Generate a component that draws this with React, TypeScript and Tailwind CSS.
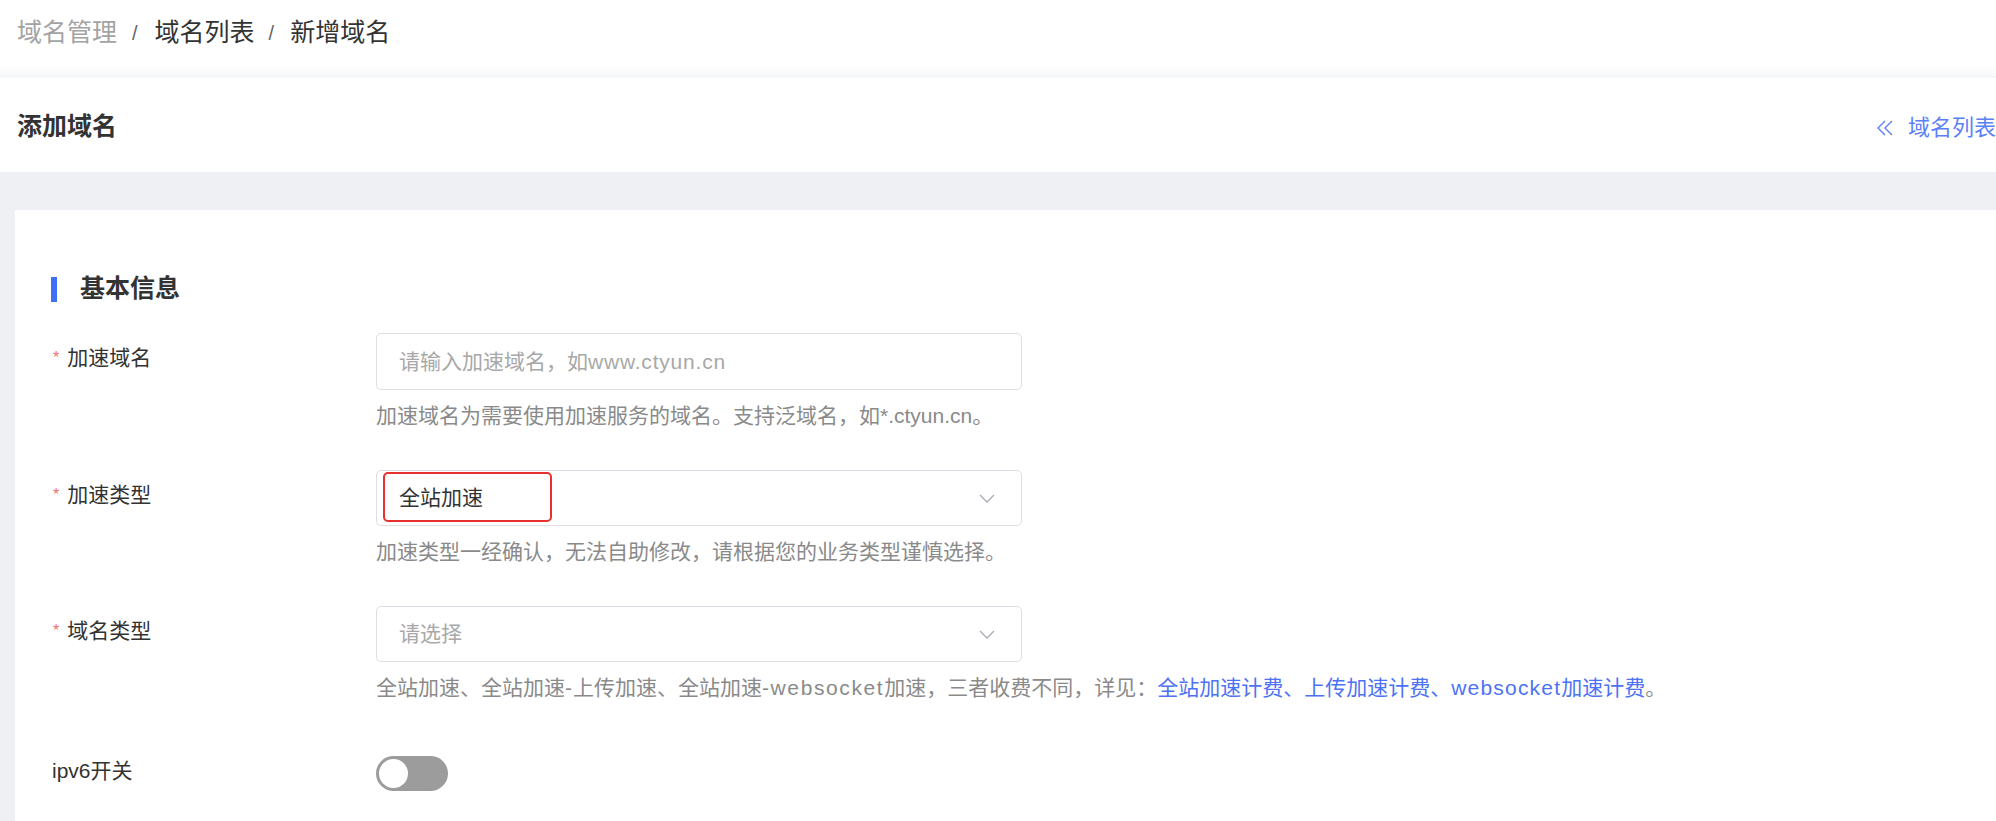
import React, { useState } from 'react';

const font = "font-['Liberation_Sans','Noto_Sans_CJK_SC',sans-serif]";

const Chevron = () => (
  <svg width="18" height="18" viewBox="0 0 18 18" fill="none">
    <path d="M2 6l7 7 7-7" stroke="#a8abb2" strokeWidth="1.3" />
  </svg>
);

const DoubleLeft = () => (
  <svg width="18" height="16" viewBox="0 0 18 16" fill="none">
    <path d="M9 1L2 8l7 7M16 1L9 8l7 7" stroke="#5b7ff8" strokeWidth="1.4" />
  </svg>
);

interface ItemProps {
  label: string;
  required?: boolean;
  children: React.ReactNode;
  help?: React.ReactNode;
}

const FormItem: React.FC<ItemProps> = ({ label, required, children, help }) => (
  <div className="flex mb-[39px]">
    <div className="w-[324px] shrink-0 pt-[10px] text-[21px] leading-[30px] text-[#333]">
      {required && <span className="text-[#f56c6c] text-[16px] ml-[1px] mr-[8px] align-top">*</span>}
      {label}
    </div>
    <div className="w-[646px]">
      {children}
      {help && <div className="mt-[11px] text-[21px] leading-[30px] text-[#8a8a8a] whitespace-nowrap">{help}</div>}
    </div>
  </div>
);

const App: React.FC = () => {
  const [ipv6, setIpv6] = useState(false);

  return (
    <div className={`${font} w-[1996px] h-[821px] overflow-hidden bg-[#eef0f4]`}>
      {/* breadcrumb */}
      <div className="h-[66px] bg-white flex items-center pl-[17px] text-[25px] text-[#333]">
        <span className="text-[#a3a3a3]">域名管理</span>
        <span className="ml-[15px] mr-[17px] text-[#666] text-[20px]">/</span>
        <span>域名列表</span>
        <span className="ml-[14px] mr-[16px] text-[#666] text-[20px]">/</span>
        <span>新增域名</span>
      </div>
      <div className="h-[12px] bg-gradient-to-b from-white to-[#f5f6f8]" />

      {/* page header */}
      <div className="h-[94px] bg-white flex items-center justify-between pl-[17px] pt-[4px]">
        <div className="text-[25px] font-bold text-[#333]">添加域名</div>
        <div className="flex items-center text-[22px] text-[#5b7ff8] whitespace-nowrap">
          <span className="mr-[14px] mt-[1px]">
            <DoubleLeft />
          </span>
          <span>域名列表</span>
        </div>
      </div>

      {/* content */}
      <div className="pt-[38px] pl-[15px]">
        <div className="bg-white h-[620px] pt-[64px] pl-[37px]">
          <div className="flex items-center h-[30px]">
            <div className="w-[6px] h-[25px] bg-[#3f6ff6] ml-[-1px]" />
            <div className="ml-[23px] text-[25px] font-bold text-[#333]">基本信息</div>
          </div>

          <div className="mt-[29px]">
            <FormItem
              label="加速域名"
              required
              help="加速域名为需要使用加速服务的域名。支持泛域名，如*.ctyun.cn。"
            >
              <div className="h-[57px] border border-[#dcdfe6] rounded-[5px] flex items-center pl-[22px] text-[21px] text-[#a8a8a8]">
                <span>
                  请输入加速域名，如<span className="tracking-[0.8px]">www.ctyun.cn</span>
                </span>
              </div>
            </FormItem>

            <FormItem
              label="加速类型"
              required
              help="加速类型一经确认，无法自助修改，请根据您的业务类型谨慎选择。"
            >
              <div className="relative h-[56px] border border-[#dcdfe6] rounded-[5px] flex items-center justify-between pl-[22px] pr-[25px] text-[21px] text-[#333]">
                <span>全站加速</span>
                <Chevron />
                <div className="absolute left-[6px] top-[1px] w-[169px] h-[50px] border-2 border-[#e8312f] rounded-[5px]" />
              </div>
            </FormItem>

            <FormItem
              label="域名类型"
              required
              help={
                <>
                  全站加速、全站加速<span className="tracking-[1px]">-</span>上传加速、全站加速
                  <span className="tracking-[1.6px]">-websocket</span>加速，三者收费不同，详见：
                  <span className="text-[#4d72f5]">
                    全站加速计费、上传加速计费、<span className="tracking-[1.2px]">websocket</span>加速计费
                  </span>
                  。
                </>
              }
            >
              <div className="h-[56px] border border-[#dcdfe6] rounded-[5px] flex items-center justify-between pl-[22px] pr-[25px] text-[21px] text-[#a8a8a8]">
                <span>请选择</span>
                <Chevron />
              </div>
            </FormItem>

            <div className="flex items-center h-[57px] mt-[5px]">
              <div className="w-[324px] shrink-0 text-[21px] text-[#333]">ipv6开关</div>
              <button
                onClick={() => setIpv6(!ipv6)}
                className={`relative w-[72px] h-[35px] rounded-full mt-[6px] ${ipv6 ? 'bg-[#3f6ff6]' : 'bg-[#9c9c9c]'}`}
              >
                <span
                  className={`absolute top-[3px] w-[29px] h-[29px] rounded-full bg-white ${ipv6 ? 'left-[40px]' : 'left-[3px]'}`}
                />
              </button>
            </div>
          </div>
        </div>
      </div>
    </div>
  );
};

export default App;
